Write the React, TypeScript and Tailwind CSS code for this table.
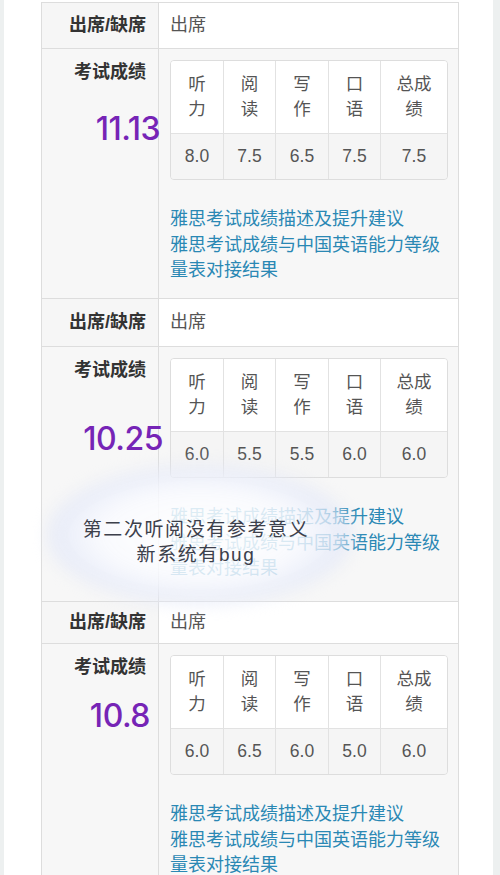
import React from 'react';

const scores = [
  { date: '11.13', values: ['8.0', '7.5', '6.5', '7.5', '7.5'] },
  { date: '10.25', values: ['6.0', '5.5', '5.5', '6.0', '6.0'] },
  { date: '10.8', values: ['6.0', '6.5', '6.0', '5.0', '6.0'] },
];

const heads = [
  ['听', '力'],
  ['阅', '读'],
  ['写', '作'],
  ['口', '语'],
  ['总成', '绩'],
];

function AttendanceRow({ height }: { height: string }) {
  return (
    <div className={`flex border-t border-[#dddddd] ${height}`}>
      <div className="flex w-[117px] shrink-0 items-center justify-end border-r border-[#dddddd] bg-[#f6f6f6] pr-3 font-bold text-[#333333]">
        出席/缺席
      </div>
      <div className="flex flex-1 items-center bg-white pl-[11px] text-[#555555]">出席</div>
    </div>
  );
}

function ScoreTable({ values }: { values: string[] }) {
  return (
    <div className="grid w-full grid-cols-[52px_52px_53px_52px_1fr] overflow-hidden rounded-[4px] border border-[#dddddd] text-[17.5px] text-[#555555]">
      {heads.map((h, i) => (
        <div
          key={'h' + i}
          className={`flex h-[72px] flex-col items-center justify-center bg-white leading-[25px] ${i > 0 ? 'border-l border-[#e2e2e2]' : ''}`}
        >
          <span>{h[0]}</span>
          <span>{h[1]}</span>
        </div>
      ))}
      {values.map((v, i) => (
        <div
          key={'v' + i}
          className={`flex h-[46px] items-center justify-center border-t border-[#e2e2e2] bg-[#f5f5f5] ${i > 0 ? 'border-l' : ''}`}
        >
          {v}
        </div>
      ))}
    </div>
  );
}

function ScoreRow({
  date,
  values,
  height,
  dateBox,
}: {
  date: string;
  values: string[];
  height: string;
  dateBox: string;
}) {
  return (
    <div className={`relative flex border-t border-[#dddddd] bg-[#f7f7f7] ${height}`}>
      <div className="w-[117px] shrink-0 border-r border-[#dddddd] pr-3 pt-[11px] text-right font-bold leading-[25px] text-[#333333]">
        考试成绩
      </div>
      <div className="flex-1 pl-[11px] pr-[10px] pt-[11px]">
        <ScoreTable values={values} />
        <div className="mt-[27px] leading-[25.5px] text-[#2a88b4]">
          雅思考试成绩描述及提升建议
          <br />
          雅思考试成绩与中国英语能力等级
          <br />
          量表对接结果
        </div>
      </div>
      {/* hand-written date note on the screenshot */}
      <span className={`absolute left-0 text-right font-['Inter',sans-serif] text-[32px] font-medium leading-[32px] tracking-[-0.5px] text-[#7624b6] ${dateBox}`}>
        {date}
      </span>
    </div>
  );
}

export default function App() {
  return (
    <div className="relative flex h-[875px] w-[500px] overflow-hidden bg-[#edf0f0] pl-[4px] pr-[7px] font-['Liberation_Sans','Noto_Sans_CJK_SC',sans-serif] text-[18px]">
      <div className="flex-1 bg-white pl-[37px] pr-[34px] pt-[2px]">
        <div className="border-x border-[#dddddd]">
          <AttendanceRow height="h-[46px]" />
          <ScoreRow {...scores[0]} height="h-[250px]" dateBox="top-[64px] w-[118px]" />
          <AttendanceRow height="h-[48px]" />
          <ScoreRow {...scores[1]} height="h-[255px]" dateBox="top-[76px] w-[121px]" />
          <AttendanceRow height="h-[42px]" />
          <ScoreRow {...scores[2]} height="h-[260px]" dateBox="top-[56px] w-[108px]" />
        </div>
      </div>

      {/* blurred note bubble */}
      <div className="absolute left-[48px] top-[466px] h-[138px] w-[304px] rounded-[50%] bg-[radial-gradient(ellipse_at_center,rgba(255,255,255,0.86)_0%,rgba(250,251,255,0.84)_45%,rgba(222,228,246,0.75)_72%,rgba(222,228,246,0)_100%)] blur-[8px]" />
      <div className="absolute left-[60px] top-[517px] w-[272px] text-center text-[19px] leading-[25px] tracking-[1.6px] text-[#3c404b]">
        第二次听阅没有参考意义
        <br />
        新系统有bug
      </div>
    </div>
  );
}
